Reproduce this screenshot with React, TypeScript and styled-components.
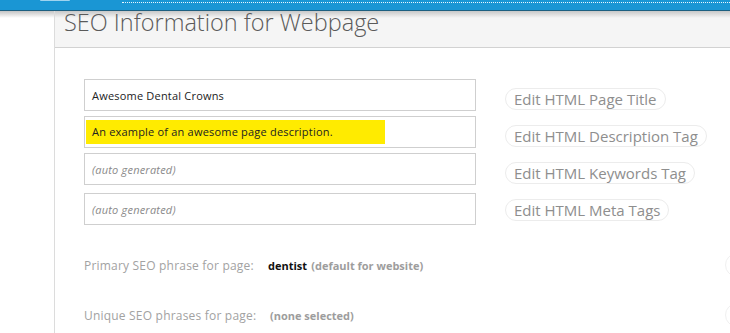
import styled, { createGlobalStyle } from 'styled-components';

const GlobalStyle = createGlobalStyle`
  html, body {
    margin: 0;
    padding: 0;
    background: #fff;
    font-family: 'Open Sans', 'Liberation Sans', sans-serif;
    overflow: hidden;
  }
`;

const TopBar = styled.div`
  height: 10px;
  background: #1a96d4;
  border-bottom: 1px solid #1d5f80;
  display: flex;
  align-items: flex-start;
`;

const TabStub = styled.div`
  width: 30px;
  height: 1px;
  margin-left: 40px;
  background: #9fd3ef;
  border-radius: 0 0 4px 4px;
`;

const DottedLine = styled.div`
  flex: 1;
  margin-left: 52px;
  margin-top: 2px;
  border-top: 1px dotted #e8f6ff;
`;

const Layout = styled.div`
  display: flex;
  height: 322px;
  background: linear-gradient(#c4c4c4, rgba(255, 255, 255, 0) 7px);
`;

const Sidebar = styled.div`
  width: 54px;
  flex-shrink: 0;
`;

const Panel = styled.div`
  flex: 1;
  border-left: 1px solid #dcdcdc;
  background: #fff;
`;

const PanelHeader = styled.div`
  height: 36px;
  background: linear-gradient(#c8c8c8, #f5f5f5 7px);
  border-bottom: 1px solid #d2d2d2;
  padding-left: 9px;
  display: flex;
  align-items: flex-start;
`;

const Title = styled.h1`
  margin: 2px 0 0;
  font-size: 23.5px;
  font-weight: 300;
  color: #5a5a5a;
  line-height: 24px;
  position: relative;
  top: -3px;
`;

const Content = styled.div`
  padding: 31px 0 0 29px;
  overflow: hidden;
`;

const FieldList = styled.div`
  display: flex;
  flex-direction: column;
`;

const FieldRow = styled.div<{ $gap: number; $lift: number }>`
  display: flex;
  align-items: flex-end;
  gap: 29px;
  margin-top: ${p => p.$gap}px;

  & > button {
    margin-bottom: ${p => p.$lift}px;
  }
`;

const Field = styled.div<{ $auto?: boolean }>`
  width: 383px;
  height: 30px;
  border: 1px solid #cfcfcf;
  display: flex;
  align-items: center;
  padding-left: 7px;
  font-size: 11px;
  letter-spacing: 0.2px;
  color: ${p => (p.$auto ? '#8a8a8a' : '#222')};
  font-style: ${p => (p.$auto ? 'italic' : 'normal')};
`;

const Highlight = styled.span`
  background: #ffeb00;
  margin-left: -6px;
  padding: 4px 52px 5px 6px;
`;

const PillButton = styled.button`
  height: 22px;
  padding: 0 8px;
  border: 1px solid #ececec;
  border-radius: 12px;
  background: #fff;
  font-family: 'Open Sans', 'Liberation Sans', sans-serif;
  font-size: 15px;
  color: #8e8e8e;
  line-height: 20px;
  white-space: nowrap;
  cursor: pointer;
`;

const PhraseRow = styled.div<{ $top: number }>`
  display: flex;
  align-items: center;
  margin-top: ${p => p.$top}px;
  height: 24px;
  position: relative;
`;

const PhraseLabel = styled.span<{ $width: number }>`
  width: ${p => p.$width}px;
  font-size: 12px;
  letter-spacing: 0.2px;
  color: #a2a2a2;
`;

const Phrase = styled.span`
  font-size: 11px;
  font-weight: 700;
  color: #111;
`;

const PhraseNote = styled.span`
  font-size: 11px;
  font-weight: 700;
  color: #9d9d9d;
`;

const EdgePill = styled.div`
  position: absolute;
  left: 641px;
  top: 0;
  width: 40px;
  height: 22px;
  border: 1px solid #f0f0f0;
  border-radius: 12px;
`;

const fields = [
  { text: 'Awesome Dental Crowns', button: 'Edit HTML Page Title', gap: 0, lift: 1 },
  { text: 'An example of an awesome page description.', button: 'Edit HTML Description Tag', gap: 5, lift: 1, highlight: true },
  { text: '(auto generated)', button: 'Edit HTML Keywords Tag', gap: 5, lift: 1, auto: true },
  { text: '(auto generated)', button: 'Edit HTML Meta Tags', gap: 8, lift: 4, auto: true },
];

const App = (): JSX.Element => {
  return (
    <>
      <GlobalStyle />
      <TopBar>
        <TabStub />
        <DottedLine />
      </TopBar>
      <Layout>
        <Sidebar />
        <Panel>
          <PanelHeader>
            <Title>SEO Information for Webpage</Title>
          </PanelHeader>
          <Content>
            <FieldList>
              {fields.map(f => (
                <FieldRow key={f.button} $gap={f.gap} $lift={f.lift}>
                  <Field $auto={f.auto}>
                    {f.highlight ? <Highlight>{f.text}</Highlight> : f.text}
                  </Field>
                  <PillButton>{f.button}</PillButton>
                </FieldRow>
              ))}
            </FieldList>
            <PhraseRow $top={28}>
              <PhraseLabel $width={184}>Primary SEO phrase for page:</PhraseLabel>
              <Phrase>dentist</Phrase>&nbsp;
              <PhraseNote>(default for website)</PhraseNote>
              <EdgePill />
            </PhraseRow>
            <PhraseRow $top={26}>
              <PhraseLabel $width={186}>Unique SEO phrases for page:</PhraseLabel>
              <PhraseNote>(none selected)</PhraseNote>
              <EdgePill />
            </PhraseRow>
          </Content>
        </Panel>
      </Layout>
    </>
  );
};

export default App;
